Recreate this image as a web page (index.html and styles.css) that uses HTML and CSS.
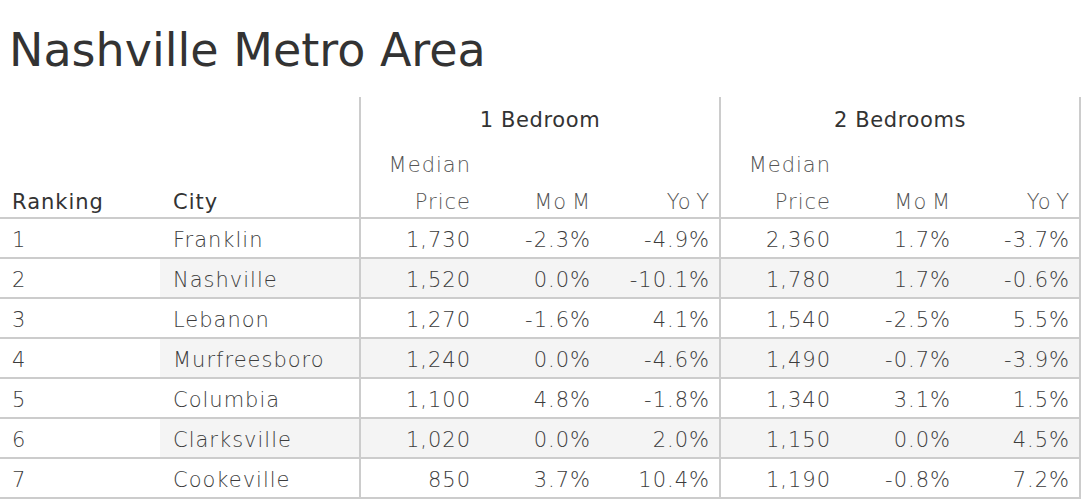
FILE: index.html
```html
<!DOCTYPE html>
<html>
<head>
<meta charset="utf-8">
<link rel="stylesheet" href="styles.css">
</head>
<body>
<h1 class="title">Nashville Metro Area</h1>
<table class="grid">
  <colgroup>
    <col class="c-rank"><col class="c-city">
    <col class="c-num"><col class="c-num"><col class="c-num">
    <col class="c-num"><col class="c-num"><col class="c-num">
  </colgroup>
  <thead>
    <tr class="h-group">
      <th colspan="2"></th>
      <th colspan="3" class="grp sep">1 Bedroom</th>
      <th colspan="3" class="grp sep end">2 Bedrooms</th>
    </tr>
    <tr class="h-cols">
      <th class="lbl">Ranking</th>
      <th class="lbl">City</th>
      <th class="sub sep"><span class="top">Median</span>Price</th>
      <th class="sub">Mo M</th>
      <th class="sub">Yo Y</th>
      <th class="sub sep"><span class="top">Median</span>Price</th>
      <th class="sub">Mo M</th>
      <th class="sub end">Yo Y</th>
    </tr>
  </thead>
  <tbody>
    <tr><td class="rank">1</td><td class="city">Franklin</td><td class="num sep">1,730</td><td class="num">-2.3%</td><td class="num">-4.9%</td><td class="num sep">2,360</td><td class="num">1.7%</td><td class="num end">-3.7%</td></tr>
    <tr class="alt"><td class="rank">2</td><td class="city">Nashville</td><td class="num sep">1,520</td><td class="num">0.0%</td><td class="num">-10.1%</td><td class="num sep">1,780</td><td class="num">1.7%</td><td class="num end">-0.6%</td></tr>
    <tr><td class="rank">3</td><td class="city">Lebanon</td><td class="num sep">1,270</td><td class="num">-1.6%</td><td class="num">4.1%</td><td class="num sep">1,540</td><td class="num">-2.5%</td><td class="num end">5.5%</td></tr>
    <tr class="alt"><td class="rank">4</td><td class="city">Murfreesboro</td><td class="num sep">1,240</td><td class="num">0.0%</td><td class="num">-4.6%</td><td class="num sep">1,490</td><td class="num">-0.7%</td><td class="num end">-3.9%</td></tr>
    <tr><td class="rank">5</td><td class="city">Columbia</td><td class="num sep">1,100</td><td class="num">4.8%</td><td class="num">-1.8%</td><td class="num sep">1,340</td><td class="num">3.1%</td><td class="num end">1.5%</td></tr>
    <tr class="alt"><td class="rank">6</td><td class="city">Clarksville</td><td class="num sep">1,020</td><td class="num">0.0%</td><td class="num">2.0%</td><td class="num sep">1,150</td><td class="num">0.0%</td><td class="num end">4.5%</td></tr>
    <tr><td class="rank">7</td><td class="city">Cookeville</td><td class="num sep">850</td><td class="num">3.7%</td><td class="num">10.4%</td><td class="num sep">1,190</td><td class="num">-0.8%</td><td class="num end">7.2%</td></tr>
  </tbody>
</table>
</body>
</html>
```

FILE: styles.css
```css
html, body {
  margin: 0;
  padding: 0;
  background: #ffffff;
}
body {
  font-family: "DejaVu Sans", "Open Sans", sans-serif;
  color: #333333;
}
.title {
  margin: 0;
  padding: 19px 0 0 9px;
  height: 78px;
  font-size: 46px;
  font-weight: 400;
  line-height: 62px;
  color: #333333;
  letter-spacing: 0;
}
.grid {
  width: 1080px;
  table-layout: fixed;
  border-collapse: collapse;
  font-size: 21px;
  letter-spacing: 1px;
}
.c-rank { width: 160px; }
.c-city { width: 200px; }
.c-num { width: 120px; }
th, td {
  padding: 0;
  white-space: nowrap;
}
.h-group th {
  height: 46px;
  line-height: 46px;
  vertical-align: middle;
  font-weight: 400;
  color: #333333;
  text-align: center;
  letter-spacing: 0.6px;
}
.h-cols th {
  height: 74px;
  vertical-align: bottom;
  padding-bottom: 0;
  border-bottom: 2px solid #cccccc;
  line-height: 30px;
}
.lbl {
  text-align: left;
  font-weight: 400;
  color: #333333;
  padding-left: 12px;
}
.h-cols .lbl + .lbl { padding-left: 13px; }
.sub {
  text-align: right;
  font-weight: 200;
  color: #555555;
  padding-right: 9px;
  word-spacing: -3px;
}
.sub .top {
  display: block;
  margin-bottom: 7px;
}
.sep { border-left: 2px solid #cccccc; }
.end { border-right: 2px solid #cccccc; }
tbody tr { height: 40px; }
tbody td {
  line-height: 34px;
  padding-top: 4px;
  vertical-align: top;
  border-bottom: 2px solid #cccccc;
  font-weight: 200;
  color: #3c3c3c;
}
.rank { padding-left: 12px; }
.city { padding-left: 13px; }
.num {
  text-align: right;
  padding-right: 9px;
}
.alt .city, .alt .num { background: #f4f4f4; }
```
